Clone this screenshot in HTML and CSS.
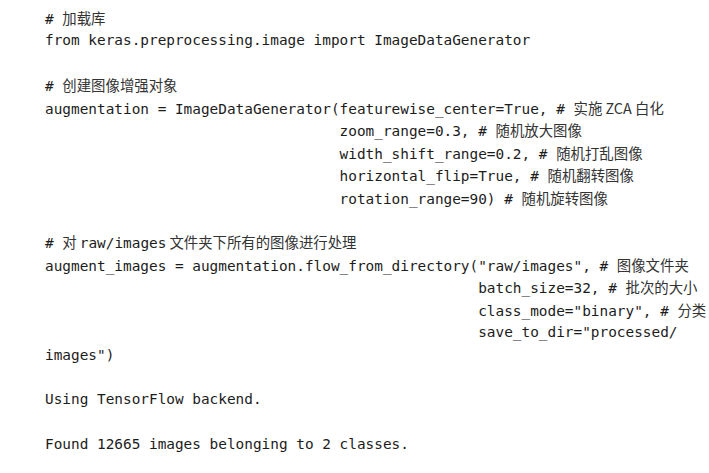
FILE: index.html
```html
<!DOCTYPE html>
<html lang="zh-CN">
<head>
<meta charset="utf-8">
<title>Keras ImageDataGenerator</title>
<link rel="stylesheet" href="styles.css">
</head>
<body>
<div class="code">
<div class="ln"># <span class="c">加载库</span></div>
<div class="ln">from keras.preprocessing.image import ImageDataGenerator</div>
<div class="ln"></div>
<div class="ln"># <span class="c">创建图像增强对象</span></div>
<div class="ln">augmentation = ImageDataGenerator(featurewise_center=True, # <span class="c">实施 ZCA 白化</span></div>
<div class="ln">                                  zoom_range=0.3, # <span class="c">随机放大图像</span></div>
<div class="ln">                                  width_shift_range=0.2, # <span class="c">随机打乱图像</span></div>
<div class="ln">                                  horizontal_flip=True, # <span class="c">随机翻转图像</span></div>
<div class="ln">                                  rotation_range=90) # <span class="c">随机旋转图像</span></div>
<div class="ln"></div>
<div class="ln"># <span class="c">对</span><span class="sp"> </span>raw/images<span class="sp"> </span><span class="c">文件夹下所有的图像进行处理</span></div>
<div class="ln">augment_images = augmentation.flow_from_directory("raw/images", # <span class="c">图像文件夹</span></div>
<div class="ln">                                                  batch_size=32, # <span class="c">批次的大小</span></div>
<div class="ln">                                                  class_mode="binary", # <span class="c">分类</span></div>
<div class="ln">                                                  save_to_dir="processed/</div>
<div class="ln">images")</div>
<div class="ln"></div>
<div class="ln">Using TensorFlow backend.</div>
<div class="ln"></div>
<div class="ln">Found 12665 images belonging to 2 classes.</div>
</div>
</body>
</html>
```

FILE: styles.css
```css
html, body {
  margin: 0;
  padding: 0;
  background: #ffffff;
}

.code {
  padding: 7px 0 0 45px;
  font-family: "DejaVu Sans Mono", "Liberation Mono", "Noto Sans CJK SC", monospace;
  font-size: 14.4px;
  color: #1c1c1c;
}

.ln {
  height: 22.45px;
  line-height: 22.45px;
  white-space: pre;
}

.c {
  font-family: "Noto Sans CJK SC", "Noto Sans", sans-serif;
  font-size: 14.4px;
  color: #333333;
  line-height: 22.45px;
}

.sp {
  display: inline-block;
  width: 3px;
}
```
